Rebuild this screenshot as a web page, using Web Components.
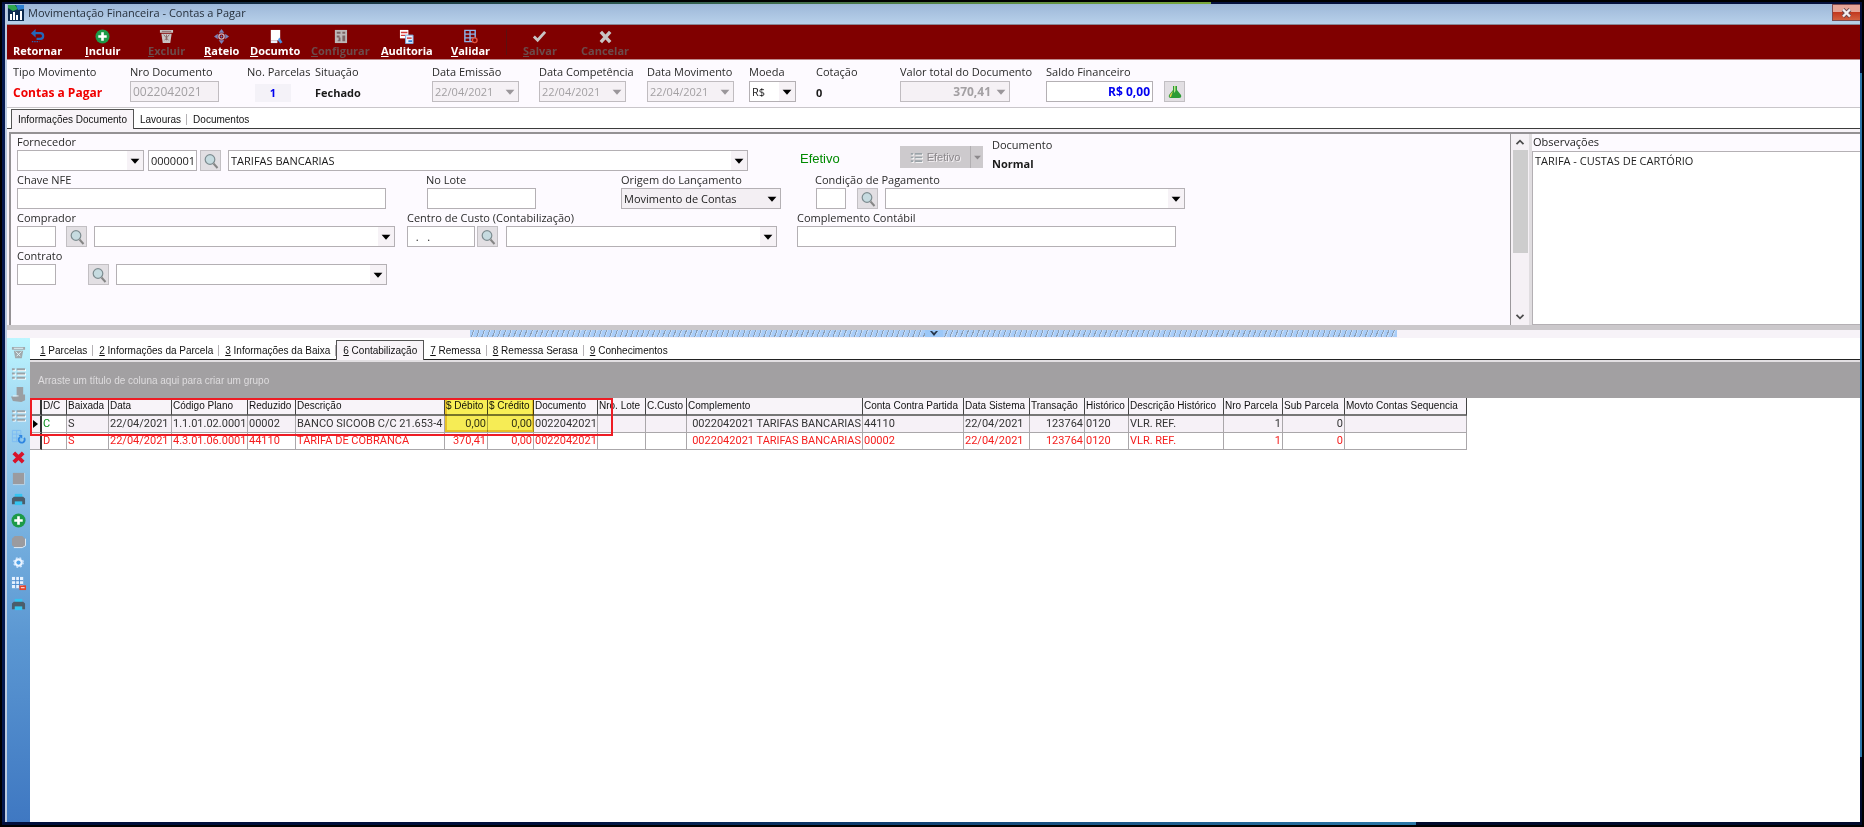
<!DOCTYPE html>
<html lang="pt-BR">
<head>
<meta charset="utf-8">
<title>Movimentação Financeira - Contas a Pagar</title>
<style>
body{margin:0;background:#000;color:#1c1c1c;font:11px/15px "Open Sans","Noto Sans",sans-serif}
</style>
</head>
<body>
<finance-app></finance-app>
<script>
const ICONS = {
  app:'<path fill="#0c2a4e" d="M0 0h16v16H0z"/><path fill="#2fa84f" d="M0 0h7l3 4-5 2-5-3z"/><path fill="#2b7fd0" d="M8 0h8v4l-6 1z"/><path fill="#fff" d="M2 9h2v6H2zM5 7h2v8H5zM8 10h2v5H8zM12 6h2v9h-2z"/>',
  back:'<path fill="none" stroke="#2567b8" stroke-width="2.4" d="M4 4.500h7a3 3 0 0 1 0 6H7"/><path fill="#2567b8" d="M6 0v9L1 4.500z"/><path stroke="#2567b8" stroke-width="1.500" stroke-dasharray="1.500 1" d="M2 13.500h8"/>',
  add:'<circle cx="8" cy="8" r="7.500" fill="#1d9a48"/><path fill="#fff" d="M6.600 3.500h2.800v3.100h3.100v2.800H9.400v3.100H6.600V9.400H3.500V6.600h3.100z"/>',
  trash:'<path fill="#c9c5c5" d="M1 1h14v3H1zM2.500 5h11L12 15H4z"/><path stroke="#8a6666" fill="none" d="M5 6l5 6M11 6l-5 6M8 6v6M3 2.500h10"/>',
  split:'<path fill="#7c82b8" d="M8 0l3 4H5zM8 16l3-4H5zM0 8l4-3v6zM16 8l-4-3v6z"/><circle cx="8" cy="8" r="2.800" fill="none" stroke="#c9aebc" stroke-width="1.500"/><circle cx="8" cy="8" r="1" fill="#5a7fd0"/>',
  doc:'<path fill="#fff" d="M3 1h10v11H3z"/><path fill="#e8eef8" d="M3 12h7v3H3z"/><path fill="#4a90e0" d="M12 9l3.500 5-2.500 1.500L10.500 12z"/>',
  config:'<path fill="#bdb8b8" d="M2 1h13v14H2z"/><path fill="#7c6464" d="M4 3h4v2H4zM10 3h3v2h-3zM4 7h3v2H4zM6 9h2v4H5v-1h1zM10 7h3v6h-3z"/>',
  audit:'<path fill="#fff" d="M1 1h9v9H1z"/><path fill="#d43a3a" d="M2 3h7v1.500H2zM2 6h5v1.500H2z"/><path fill="#eaf3ff" stroke="#7aa6dc" d="M7 6.500h8v9H7z"/><path fill="#d43a3a" d="M8.500 9h5v1.500h-5z"/><path fill="#2d7dd2" d="M10 12h4v2h-4z"/>',
  grid:'<path fill="none" stroke="#8db4ea" stroke-width="1.500" d="M2 1.500h11v12H2zM7.500 1.500v12M2 5.500h11M2 9.500h11"/><circle cx="12.500" cy="12" r="2.500" fill="#800000" stroke="#e0503c" stroke-width="1.500"/>',
  check:'<path fill="none" stroke="#c8c4c4" stroke-width="3" d="M2 8l4 4 8-9"/>',
  cross:'<path stroke="#c8c4c4" stroke-width="3.600" d="M3 3l10 11M13 3L3 14"/>',
  lens:'<circle cx="7" cy="6.500" r="4.800" fill="#c6dbe0" stroke="#7d8c90" stroke-width="1.200"/><path stroke="#868686" stroke-width="2" d="M10.500 10.500l4 4.500"/>',
  flask:'<path fill="#2c9b35" d="M6 2h4v4l4 5q1 3-2 3H4q-3 0-2-3l4-5z"/><path fill="#e8cf4a" d="M6 7l-3 4q-1 2 1 2z"/><path fill="#b9e58a" d="M7 2h1.500v5L7 9z"/>',
  caret:'<path fill="currentColor" d="M3 5.500h10L8 11z"/>',
  up:'<path fill="none" stroke="#4c4c4c" stroke-width="2" d="M4 10.500l4-4 4 4"/>',
  down:'<path fill="none" stroke="#4c4c4c" stroke-width="2" d="M4 5.500l4 4 4-4"/>',
  sTrash:'<path fill="#a0a9ac" d="M1 2h14v3H1zM3 6h10l-1.500 8h-7z"/><path stroke="#e4f6fb" fill="none" d="M3 3.500h10M5 7l5 5M11 7l-5 5"/>',
  list:'<path fill="#fff" d="M2 3.500h3v2H2zM2 8h3v2H2zM2 12.500h3v2H2zM7 3.500h9v2H7zM7 8h9v2H7zM7 12.500h9v2H7z"/><path fill="#9aa3a8" d="M1 2.500h3v2H1zM1 7h3v2H1zM1 11.500h3v2H1zM6 2.500h9v2H6zM6 7h9v2H6zM6 11.500h9v2H6z"/>',
  stamp:'<path fill="#9a9ea2" d="M6 0h7v8h2v6l-4 2-9-1-2-5h6z"/><path fill="#e8f4f8" d="M2 9h6v1H2z"/>',
  refresh:'<path fill="none" stroke="#7dbcf2" d="M1.500 1.500h9v12h-9zM6 1.500v12M1.500 5.500h9M1.500 9.500h6"/><path fill="none" stroke="#2f86e0" stroke-width="2" d="M14 9.500a3.200 3.200 0 1 1-4-1"/><path fill="#2f86e0" d="M8 6.500h4v4z"/>',
  redx:'<path stroke="#d8122a" stroke-width="4" d="M3 3l10 10M13 3L3 13"/>',
  block:'<path fill="#9b9b9f" d="M2 2h12v12H2z"/><path fill="none" stroke="#bcd2e2" d="M2 14.500h12.500V2"/>',
  printer:'<path fill="#35c4f0" d="M4 2h8v4H4z"/><path fill="#4b5d6b" d="M3 5h10l2 2v6H1V7z"/><path fill="#35c4f0" d="M4 10h8v4H4z"/>',
  blob:'<path fill="#9b9b9f" d="M4 2h8l3 3v7l-3 2H4l-3-2V5z"/><path fill="none" stroke="#e8f0f6" d="M3 14.500h9l3.500-2V5"/>',
  gear:'<circle cx="8" cy="8" r="3.400" fill="none" stroke="#eaf4ff" stroke-width="2.400"/><circle cx="8" cy="8" r="5" fill="none" stroke="#cfe6ff" stroke-width="1.500" stroke-dasharray="2 2"/><circle cx="8" cy="8" r="2" fill="#4fa3ea"/>',
  calc:'<path fill="#e6f2ff" d="M1 1h12v12H1z"/><path stroke="#4486cc" d="M5 1v12M9 1v12M1 5h12M1 9h12"/><path fill="#e2452c" d="M9 10h7v5H9z"/><path fill="#fff" d="M10.500 12h4v1h-4z"/>'
};
const icon = (name, size = 16) =>
  `<svg width="${size}" height="${size}" viewBox="0 0 16 16" aria-hidden="true">${ICONS[name]}</svg>`;
const define = (name, render) => customElements.define(name, class extends HTMLElement {
  connectedCallback() {
    if (this.shadowRoot) return;
    const t = document.createElement('template');
    t.innerHTML = render(this);
    this.attachShadow({ mode: 'open' }).append(t.content.cloneNode(true));
  }
});

define('title-bar', () => `
<style>
:host{display:flex;align-items:flex-start;height:20px;background:linear-gradient(#9db7d8,#b8d1ea);border-bottom:1px solid #8a8694}
svg{display:block}
.icon{margin:1px 4px 0 1px}
h1{margin:1px 0 0;font-size:11px;line-height:15px;font-weight:400;color:#26303c;flex:1}
button{width:28px;height:17px;padding:0;border:1px solid #7c4b50;border-right:0;background:linear-gradient(#e5a597 45%,#c2391f 50%,#d2603f);display:grid;place-items:center}
</style>
<span class="icon">${icon('app')}</span><h1><slot></slot></h1>
<button aria-label="Fechar"><svg width="11" height="10" viewBox="0 0 11 10"><path stroke="#6b4a50" stroke-width="4" d="M2 1.500l7 7M9 1.500l-7 7"/><path stroke="#f4f0f0" stroke-width="2.400" d="M2 1.500l7 7M9 1.500l-7 7"/></svg></button>`);

define('tool-button', el => `
<style>
:host{display:block;justify-self:start}
button{display:flex;flex-direction:column;align-items:center;border:0;padding:0;background:none;color:#fff;font:bold 11px/14px "Open Sans",sans-serif}
button:disabled{color:#6c4b4b}
svg{display:block}
u{text-underline-offset:1px}
</style>
<button ${el.hasAttribute('disabled') ? 'disabled' : ''}>${icon(el.getAttribute('icon'), 15)}<span><slot></slot></span></button>`);

define('tool-bar', () => `
<style>
:host{display:grid;grid-template-columns:72px 63px 56px 46px 61px 70px 70px 55px 17px 58px auto;justify-content:start;height:30px;padding:4px 6px 0;background:#800000;border-bottom:1px solid #bd8a8c}
i{width:1px;height:26px;background:#5c1010}
</style>
<tool-button icon="back">Retornar</tool-button>
<tool-button icon="add"><u>I</u>ncluir</tool-button>
<tool-button icon="trash" disabled><u>E</u>xcluir</tool-button>
<tool-button icon="split"><u>R</u>ateio</tool-button>
<tool-button icon="doc"><u>D</u>ocumto</tool-button>
<tool-button icon="config" disabled><u>C</u>onfigurar</tool-button>
<tool-button icon="audit"><u>A</u>uditoria</tool-button>
<tool-button icon="grid"><u>V</u>alidar</tool-button>
<i></i>
<tool-button icon="check" disabled><u>S</u>alvar</tool-button>
<tool-button icon="cross" disabled>Cancelar</tool-button>`);

/* parts: "kind:width:value:flags" joined with "|"; flags: d disabled, b bold, r right, g grey face, l large text, k blue text */
define('form-field', el => {
  const label = el.getAttribute('label');
  const parts = (el.getAttribute('parts') || '').split('|').filter(Boolean).map((p, i) => {
    const [kind, w, value = '', flags = ''] = p.split(':');
    const id = i ? `aria-label="${label} ${i + 1}"` : 'id="c"';
    const cls = [...flags].join(' ');
    const dis = flags.includes('d') ? 'disabled' : '';
    if (kind === 'gap') return `<span style="width:${w}px"></span>`;
    if (kind === 'look' || kind === 'flask') return `<button style="width:${w}px" aria-label="${kind === 'look' ? 'Pesquisar' : 'Saldo'}">${icon(kind === 'look' ? 'lens' : 'flask')}</button>`;
    if (kind === 'combo') return `<span class="combo ${cls}" style="width:${w}px"><select ${id} ${dis}><option>${value}</option></select><b>${icon('caret', 14)}</b></span>`;
    if (kind === 'out') return `<output ${id} class="${cls} ${el.getAttribute('tone') || ''}" style="width:${w}px">${value}</output>`;
    return `<input ${id} ${dis} class="${cls}" style="width:${w}px" value="${value}">`;
  }).join('');
  return `
<style>
:host{display:block}
label{display:block;height:15px;white-space:nowrap;color:#2a2a2a}
.row{display:flex;margin-top:var(--label-gap,1px)}
input,select,button,output{box-sizing:border-box;height:21px;margin:0;font:inherit;color:#1a1a1a;border:1px solid #b4b0b4;background:#fff;border-radius:0;padding:0 2px}
.combo{position:relative;display:block;height:21px}
select{width:100%;appearance:none;padding:0 18px 0 2px;opacity:1;color:#1a1a1a}
.combo b{position:absolute;right:1px;top:1px;width:16px;height:19px;display:grid;place-items:center;background:#f6f2f6;color:#000;pointer-events:none}
.g select,.g b{background:#f3eff3}
input:disabled,select:disabled{background:#f5f1f5;color:#a3a0a3;border-color:#c0bcc0}
.combo.d b{color:#9a969a;background:none}
.b,.b select{font-weight:700;font-size:12px}
.r,.r select{text-align:right}
.l{font-size:12px}
.k{color:#0000f0}
button{display:grid;place-items:center;padding:0;background:#e2dfe3;border-color:#c2bfc3}
output{border:0;background:none;padding:0;height:24px;line-height:24px;white-space:nowrap;font-size:11px;font-weight:700}
.red{color:#f00000;font-size:12px}
.chip{color:#0000f0;background:#f4f2f8;text-align:center;margin-left:8px;height:18px;line-height:18px;margin-top:3px}
svg{display:block}
</style>
<label for="c">${label}</label><div class="row">${parts}</div>`;
});

define('summary-bar', () => `
<style>
:host{display:grid;grid-template-columns:117px 117px 68px 117px 107px 108px 102px 67px 84px 146px auto;justify-content:start;height:43px;padding:4px 6px 0;background:#fdfaff;border-bottom:1px solid #c9c6ca}
form-field{--label-gap:2px}
</style>
<form-field label="Tipo Movimento" tone="red" parts="out:110:Contas a Pagar"></form-field>
<form-field label="Nro Documento" parts="input:89:0022042021:dl"></form-field>
<form-field label="No. Parcelas" tone="chip" parts="out:36:1"></form-field>
<form-field label="Situação" parts="out:80:Fechado"></form-field>
<form-field label="Data Emissão" parts="combo:87:22/04/2021:d"></form-field>
<form-field label="Data Competência" parts="combo:87:22/04/2021:d"></form-field>
<form-field label="Data Movimento" parts="combo:87:22/04/2021:d"></form-field>
<form-field label="Moeda" parts="combo:47:R$"></form-field>
<form-field label="Cotação" parts="out:30:0"></form-field>
<form-field label="Valor total do Documento" parts="combo:110:370,41:dbr"></form-field>
<form-field label="Saldo Financeiro" parts="input:107:R$ 0,00:brk|gap:11|flask:21"></form-field>`);

define('tab-strip', el => {
  const active = +el.getAttribute('active');
  const tabs = el.getAttribute('tabs').split('|').map((t, i) => {
    const text = /^\d/.test(t) ? `<u>${t[0]}</u>${t.slice(1)}` : t;
    return `<button role="tab" aria-selected="${i === active}">${text}</button>`;
  }).join('');
  return `
<style>
:host{display:flex;align-items:flex-end;height:20px;background:#fff;border-bottom:1px solid #3c3c3c;font:10px/14px "Liberation Sans",Arial,sans-serif;padding-left:4px}
button{position:relative;border:0;background:none;font:inherit;padding:0 6px;height:17px;color:#111;white-space:nowrap}
button::after{content:"";position:absolute;right:0;top:3px;height:11px;border-right:1px solid #b5b2b5}
button[aria-selected=true]{height:20px;margin-bottom:-1px;padding:0 6px;border:1px solid #555;border-bottom:0;background:#f8f4f8}
button[aria-selected=true]::after,button:last-child::after{display:none}
</style>${tabs}`;
});

define('split-button', () => `
<style>
:host{display:flex;width:83px;height:22px;margin-top:12px}
button{border:0;background:#cdcacd;color:#8c898c;font:11px/20px "Liberation Sans",Arial,sans-serif;display:flex;align-items:center;justify-content:center;gap:4px;padding:0;text-shadow:1px 1px #f4f0f4}
.m{flex:1}.a{width:13px;border-left:1px solid #b2afb2}
</style>
<button class="m" disabled>${icon('list', 13)}<slot></slot></button><button class="a" disabled aria-label="Opções">${icon('caret', 11)}</button>`);

define('document-form', () => `
<style>
:host{display:flex;height:191px;background:#fdfaff;border:solid #949194;border-width:2px 0 0 2px;margin-left:2px}
form{flex:1;min-width:0;display:flex;flex-direction:column;gap:1px;padding:0 0 0 6px;overflow:hidden}
.row{display:grid;justify-content:start;align-items:start;height:37px}
.r1{grid-template-columns:783px 100px 92px auto}
.r2{grid-template-columns:409px 195px 194px auto}
.r3{grid-template-columns:390px 390px auto}
.ef{margin-top:17px;color:#008a00;font:13px/16px "Liberation Sans",Arial,sans-serif}
.doc{margin-top:3px;--label-gap:0px}
.scroll{width:18px;border-left:1px solid #9b989b;background:#f5f1f5;display:flex;flex-direction:column;align-items:center}
.scroll svg{display:block;margin:1px 0}
.thumb{width:15px;height:103px;background:#cdcdcd;margin-bottom:auto}
aside{flex:0 0 331px;border-left:3px solid #e0dde0;box-sizing:border-box;display:flex;flex-direction:column}
label{display:block;height:17px;padding-left:1px}
textarea{flex:1;box-sizing:border-box;border:1px solid #b4b0b4;border-right:0;margin:0;padding:1px 2px;font:inherit;color:#222;resize:none;background:#fff;outline:0}
</style>
<form>
<div class="row r1">
<form-field label="Fornecedor" parts="combo:127|gap:4|input:49:0000001|gap:3|look:21|gap:7|combo:520:TARIFAS BANCARIAS"></form-field>
<span class="ef">Efetivo</span><split-button>Efetivo</split-button>
<form-field class="doc" label="Documento" parts="out:60:Normal"></form-field></div>
<div class="row r2">
<form-field label="Chave NFE" parts="input:369"></form-field>
<form-field label="No Lote" parts="gap:1|input:109"></form-field>
<form-field label="Origem do Lançamento" parts="combo:160:Movimento de Contas:g"></form-field>
<form-field label="Condição de Pagamento" parts="gap:1|input:30|gap:11|look:21|gap:7|combo:300"></form-field></div>
<div class="row r3">
<form-field label="Comprador" parts="input:39|gap:10|look:21|gap:7|combo:301"></form-field>
<form-field label="Centro de Custo (Contabilização)" parts="input:68:  .   .|gap:2|look:21|gap:8|combo:271"></form-field>
<form-field label="Complemento Contábil" parts="input:379"></form-field></div>
<div class="row">
<form-field label="Contrato" parts="input:39|gap:32|look:21|gap:7|combo:271"></form-field></div>
</form>
<div class="scroll">${icon('up', 14)}<div class="thumb"></div>${icon('down', 14)}</div>
<aside><label for="obs">Observações</label><textarea id="obs">TARIFA - CUSTAS DE CARTÓRIO</textarea></aside>`);

define('split-handle', () => `
<style>
:host{display:flex;justify-content:center;height:8px;border-top:5px solid #cbc8cb;background:#f7f3f8}
div{width:50%;height:7px;display:flex;justify-content:center;background:repeating-linear-gradient(110deg,#a9cdf8 0 3px,#8b9fb6 3px 4px,#c4dcf8 4px 5px)}
button{width:18px;height:7px;border:0;padding:0;background:#9cc8f8;display:grid;place-items:center}
</style>
<div><button aria-label="Recolher painel"><svg width="8" height="5" viewBox="0 0 8 5"><path fill="#27364a" d="M0 0h2l2 2 2-2h2L4 5z"/></svg></button></div>`);

define('side-bar', () => `
<style>
:host{display:flex;flex-direction:column;gap:5px;align-items:center;width:23px;padding-top:6px;box-sizing:border-box;background:linear-gradient(#bdf6ff,#9fd4f0 80px,#74aede 200px,#5b97d2 300px,#3f78c2)}
button{border:0;padding:0;background:none;height:16px;display:grid;place-items:center}
svg{display:block}
</style>
${[['sTrash','Excluir'],['list','Lista'],['stamp','Carimbo'],['list','Itens'],['refresh','Atualizar'],['redx','Remover'],['block','Bloco'],['printer','Imprimir'],['add','Adicionar'],['blob','Agrupar'],['gear','Ajustes'],['calc','Calcular'],['printer','Imprimir tudo']].map(([i, t]) => `<button aria-label="${t}">${icon(i, 15)}</button>`).join('')}`);

const COLUMNS = [['',12],['D/C',25],['Baixada',42],['Data',63],['Código Plano',76],['Reduzido',48],['Descrição',149],['$ Débito',43,1],['$ Crédito',46,1],['Documento',64],['Nro. Lote',48],['C.Custo',41],['Complemento',176,1],['Conta Contra Partida',101],['Data Sistema',66],['Transação',55,1],['Histórico',44],['Descrição Histórico',95],['Nro Parcela',59,1],['Sub Parcela',62,1],['Movto Contas Sequencia',122]];
const ROWS = [
  ['▶','C','S','22/04/2021','1.1.01.02.0001','00002','BANCO SICOOB C/C 21.653-4','0,00','0,00','0022042021','','','0022042021 TARIFAS BANCARIAS','44110','22/04/2021','123764','0120','VLR. REF.','1','0',''],
  ['','D','S','22/04/2021','4.3.01.06.0001','44110','TARIFA DE COBRANCA','370,41','0,00','0022042021','','','0022042021 TARIFAS BANCARIAS','00002','22/04/2021','123764','0120','VLR. REF.','1','0','']
];
define('entry-grid', () => `
<style>
:host{display:block;position:relative}
table{border-collapse:separate;border-spacing:0;table-layout:fixed;width:1437px}
th,td{box-sizing:border-box;height:17px;padding:0 1px;white-space:nowrap;overflow:hidden;text-align:left;font-weight:400;border-right:1px solid #aaa7aa}
th{height:18px;font:10px/16px "Liberation Sans",Arial,sans-serif;background:#f8f4f9;color:#111;border-right-color:#444;border-bottom:2px solid #777}
td{font:11px/16px Roboto,Arial,sans-serif;border-bottom:1px solid #aaa7aa;color:#333}
.n{text-align:right}
tr.cur td{background:#f6f1f7}
tr.cur td.dc{color:#0a8f1c;background:#fff}
tr.neg td{color:#f51d1d}
td:first-child,th:first-child{background:#f6f1f7!important;border-right:2px solid #333;padding:0}
td svg{display:block;margin:auto}
.mark,.hl{position:absolute;pointer-events:none;box-sizing:border-box}
.mark{left:0;top:0;width:583px;height:38px;border:2px solid #ee1c24}
.hl{left:415px;top:0;width:89px;height:34px;background:#fffa58;border:2px solid #f0cc28;mix-blend-mode:multiply}
</style>
<table><colgroup>${COLUMNS.map(c => `<col style="width:${c[1]}px">`).join('')}</colgroup>
<thead><tr>${COLUMNS.map(c => `<th>${c[0]}</th>`).join('')}</tr></thead>
<tbody>${ROWS.map((r, k) => `<tr class="${k ? 'neg' : 'cur'}">${r.map((v, i) =>
  `<td class="${COLUMNS[i][2] ? 'n' : ''}${i === 1 ? ' dc' : ''}">${v === '▶' ? '<svg width="5" height="8" viewBox="0 0 5 8"><path d="M0 0l5 4-5 4z"/></svg>' : v}</td>`).join('')}</tr>`).join('')}</tbody></table>
<span class="hl"></span><span class="mark"></span>`);

define('detail-pane', () => `
<style>
:host{display:flex;flex:1;background:#fff}
main{flex:1;min-width:0}
tab-strip{height:21px;border-bottom-color:#222}
.group{height:38px;line-height:37px;padding-left:8px;background:#a2a0a2;color:#dedcde;font-family:"Liberation Sans",Arial,sans-serif;font-size:10px;border-top:2px solid #e2dfe2;box-sizing:border-box}
</style>
<side-bar></side-bar>
<main><tab-strip active="3" tabs="1 Parcelas|2 Informações da Parcela|3 Informações da Baixa|6 Contabilização|7 Remessa|8 Remessa Serasa|9 Conhecimentos"></tab-strip>
<div class="group">Arraste um título de coluna aqui para criar um grupo</div>
<entry-grid></entry-grid></main>`);

define('finance-app', () => `
<style>
:host{display:flex;flex-direction:column;min-height:100vh;box-sizing:border-box;padding:2px;background:#000}
.top{height:2px;background:linear-gradient(90deg,#04103c,#2e5a50 35%,#7aa83c 65%,#04103c 65%)}
.bottom{height:3px;background:linear-gradient(90deg,#000f3c 30%,#0d3a6c 45%,#2b78a8 76%,#000a2c 76%)}
.mid{flex:1;display:flex;background:#04184e}
.win{flex:1;min-width:0;display:flex;flex-direction:column;margin-left:3px;border-left:2px solid #bccbe0;background:#fff}
.edge{width:2px;background:linear-gradient(#04103c 69px,#2d78ac 69px 92%,#000a2c 92%)}
document-form{margin-top:3px}
.upper{background:#f7f3f8}
</style>
<div class="top"></div>
<div class="mid"><div class="win">
<title-bar>Movimentação Financeira - Contas a Pagar</title-bar>
<tool-bar></tool-bar><summary-bar></summary-bar>
<div class="upper"><tab-strip active="0" tabs="Informações Documento|Lavouras|Documentos"></tab-strip>
<document-form></document-form></div>
<split-handle></split-handle><detail-pane></detail-pane>
</div><div class="edge"></div></div>
<div class="bottom"></div>`);
</script>
</body>
</html>
